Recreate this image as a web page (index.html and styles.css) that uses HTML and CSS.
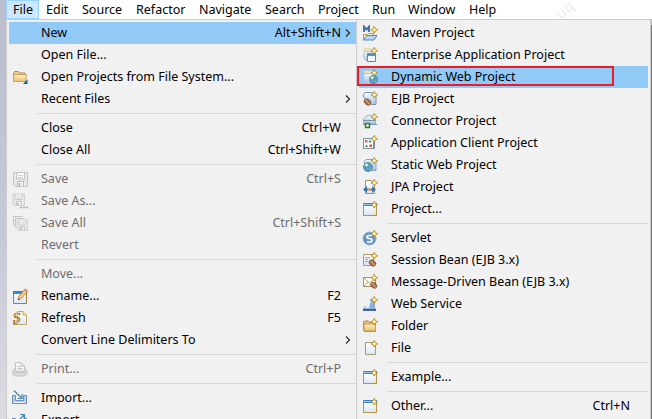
FILE: index.html
```
<!DOCTYPE html>
<html lang="en">
<head>
<meta charset="utf-8">
<title>File menu</title>
<link rel="stylesheet" href="styles.css">
</head>
<body>
<svg class="defs" aria-hidden="true">
  <defs>
    <linearGradient id="gold" x2="0" y2="1"><stop stop-color="#fff3c4"/><stop offset="1" stop-color="#ebc06c"/></linearGradient>
    <linearGradient id="sky" x2="0" y2="1"><stop stop-color="#f2f8fd"/><stop offset="1" stop-color="#a9c6e4"/></linearGradient>
    <linearGradient id="paper" x2="0" y2="1"><stop stop-color="#fff"/><stop offset="1" stop-color="#d9e6f6"/></linearGradient>
    <symbol id="spark" viewBox="0 0 8 8"><path d="M4 .4 5.200 2.800 7.600 4 5.200 5.200 4 7.600 2.800 5.200.4 4 2.800 2.800Z" fill="#fff6c2" stroke="#b68a1e"/></symbol>
    <symbol id="jar" viewBox="0 0 16 16"><path d="M2.500 4.500h9v9h-8q-2-2-2-5Z" fill="url(#sky)" stroke="#b4c4d2"/><path d="M1 3q0-1.500 1.500-1.500H10L9 4H2Z" fill="#e3c681"/><path d="M2.500 3H10" stroke="#fff"/></symbol>
    <symbol id="window" viewBox="0 0 16 16"><path d="M1.500 3.500h13v11h-13Z" fill="url(#paper)" stroke="#ad9355"/><path d="M1 2h14v3H1Z" fill="#3f87c8"/><path d="M1 3.500h14" stroke="#8cc8ee"/><path d="M14 8v6H8q5-1 6-6Z" fill="#f6e7b0"/></symbol>
    <symbol id="bean" viewBox="0 0 8 8"><ellipse cx="4" cy="4" rx="3.800" ry="2.700" transform="rotate(38 4 4)" fill="#a8724a" stroke="#6b4226" stroke-width=".6"/><path d="M1 1.500Q4 3 4 4t3 2.500" fill="none" stroke="#e8c8a0" stroke-width=".8"/></symbol>
    <symbol id="disk" viewBox="0 0 16 16"><path d="M1.500 2q0-.5.500-.5h13q.5 0 .5.500v13q0 .5-.5.500H3L1.500 14Z" fill="#e8e8e8" stroke="#c4c4c4"/><path d="M4.500 2v6h8V2" fill="#f7f7f7" stroke="#c4c4c4"/><path d="M6 4.500h5M6 6.500h5" stroke="#d0d0d0"/><path d="M5.500 15v-4.500h6V15" fill="#f2f2f2" stroke="#bababa"/><path d="M7.500 12v3" stroke="#b4b4b4" stroke-width="1.500"/></symbol>
    <symbol id="globe" viewBox="0 0 10 10"><circle cx="5" cy="5" r="4.500" fill="#5a9bd0" stroke="#4a7cb2" stroke-width=".8"/><path d="M2 2q4-2 4 1L4 5 1 4ZM6 6l3-1-2 4Z" fill="#80b86b"/><circle cx="3.500" cy="3" r="1.300" fill="#e8f7fb"/></symbol>
  </defs>
</svg>

<nav class="menubar">
  <span class="menubar__item menubar__item--open">File</span><span class="menubar__item">Edit</span><span class="menubar__item">Source</span><span class="menubar__item">Refactor</span><span class="menubar__item">Navigate</span><span class="menubar__item">Search</span><span class="menubar__item">Project</span><span class="menubar__item">Run</span><span class="menubar__item">Window</span><span class="menubar__item">Help</span>
  <span class="watermark">uq</span>
</nav>

<div class="panes">
  <ul class="menu menu--file">
    <li class="item item--active"><span class="label">New</span><kbd>Alt+Shift+N</kbd><svg class="chevron" viewBox="0 0 6 10"><path d="m1 1.500 3.500 3.500L1 8.500"/></svg></li>
    <li class="item"><span class="label">Open File...</span></li>
    <li class="item"><svg class="icon" viewBox="0 0 16 16"><path d="M1.500 12.500v-8l1-2h4l1 1.500h5.500v8.500Z" fill="#efd08c" stroke="#b98a42"/><path d="M2 5.500h12.500l-1 7H1.500Z" fill="url(#gold)" stroke="#c9a561"/><path d="M15.500 10.500v4.500H11Z" fill="#155998"/></svg><span class="label">Open Projects from File System...</span></li>
    <li class="item"><span class="label">Recent Files</span><svg class="chevron" viewBox="0 0 6 10"><path d="m1 1.500 3.500 3.500L1 8.500"/></svg></li>
    <li class="separator"></li>
    <li class="item"><span class="label">Close</span><kbd>Ctrl+W</kbd></li>
    <li class="item"><span class="label">Close All</span><kbd>Ctrl+Shift+W</kbd></li>
    <li class="separator"></li>
    <li class="item item--disabled"><svg class="icon" viewBox="0 0 16 16"><use href="#disk"/></svg><span class="label">Save</span><kbd>Ctrl+S</kbd></li>
    <li class="item item--disabled"><svg class="icon" viewBox="0 0 16 16"><use href="#disk" width="13" height="13"/><path d="M8 14.500h2m1 0h2m1 0h2" stroke="#aaa" stroke-width="1.500"/></svg><span class="label">Save As...</span></li>
    <li class="item item--disabled"><svg class="icon" viewBox="0 0 16 16"><path d="M1.500 10.500v-9h9M3.500 12.500v-9h9" fill="none" stroke="#c4c4c4"/><use href="#disk" x="4" y="4" width="12" height="12"/></svg><span class="label">Save All</span><kbd>Ctrl+Shift+S</kbd></li>
    <li class="item item--disabled"><span class="label">Revert</span></li>
    <li class="separator"></li>
    <li class="item item--disabled"><span class="label">Move...</span></li>
    <li class="item"><svg class="icon" viewBox="0 0 16 16"><path d="M1.500 4.500h13v11h-13Z" fill="url(#paper)" stroke="#9b8146"/><path d="M1 3h12v3H1Z" fill="#3987c4"/><path d="m6 12 1-4 6-7 2.500 2.500-6 7Z" fill="#f0c879" stroke="#a57542" stroke-width=".7"/><path d="m12 2 1.500-1.500 2.500 2L14.500 4Z" fill="#db8d85"/><path d="m6 12 .5-1.800 1.300 1.300Z" fill="#333"/></svg><span class="label">Rename...</span><kbd>F2</kbd></li>
    <li class="item"><svg class="icon" viewBox="0 0 16 16"><path d="M5.500 1.500H11L14.500 5v9.500h-9Z" fill="url(#paper)" stroke="#c0a971"/><path d="M11 1v4h4" fill="#f5dfa3" stroke="#c5aa6d"/><path d="M7.500 5V3.500H5Q2.500 3.500 2.500 5.500T5 7.500h2M2 11.500h2q3.500 0 3.500-2T5 8M2 10v4h3" fill="none" stroke="#b27b25" stroke-width="1.700"/><path d="M6.500 3.700H5Q3 4 3 5.500M3 11.500q4 0 4-1.500" fill="none" stroke="#f3cf80" stroke-width=".8"/></svg><span class="label">Refresh</span><kbd>F5</kbd></li>
    <li class="item"><span class="label">Convert Line Delimiters To</span><svg class="chevron" viewBox="0 0 6 10"><path d="m1 1.500 3.500 3.500L1 8.500"/></svg></li>
    <li class="separator"></li>
    <li class="item item--disabled"><svg class="icon" viewBox="0 0 16 16"><path d="M.5 9.500 3 7.500h10l2 2v3L13 15H3L.5 13Z" fill="#ddd" stroke="#c4c4c4"/><path d="M3.500 10v-8.500H9L12.500 5v5Z" fill="#f5f5f5" stroke="#c4c4c4"/><path d="M9 2v3h3M5.500 5.500h3M5.500 7.500h5M2 11.500h12" fill="none" stroke="#c0c0c0"/></svg><span class="label">Print...</span><kbd>Ctrl+P</kbd></li>
    <li class="separator"></li>
    <li class="item"><svg class="icon" viewBox="0 0 16 16"><path d="M.5 5.500h3v5h8v-5h3v8H.5Z" fill="#b4cdea" stroke="#6990c0"/><path d="M2 12.500h11" stroke="#eaf4ff"/><path d="m2 .5 7.500 7.500M10 4v4.500H5.500" fill="none" stroke="#4786ac" stroke-width="1.200"/></svg><span class="label">Import...</span></li>
    <li class="item"><svg class="icon" viewBox="0 0 16 16"><path d="M.5 6.500h3v4h8v-4h3v8H.5Z" fill="#a7c3e3" stroke="#5380b5"/><path d="m6 9 6-6M8 2.500h4.500V7" fill="none" stroke="#4786ac" stroke-width="1.200"/></svg><span class="label">Export...</span></li>
  </ul>

  <ul class="menu menu--new">
    <li class="item"><svg class="icon" viewBox="0 0 16 16"><path d="M1.500 14.500v-5h4l1-1h5v6" fill="#fbf0c5" stroke="#b7974c"/><path d="M4.500 10.500H15l-3 4.500H1.500Z" fill="#b9d6f4" stroke="#5f86ba"/><path d="M2 7V1.500l2.500 3 2.500-3V7" fill="none" stroke="#3b6797" stroke-width="1.800"/><use href="#spark" x="8.500" y="1" width="7.500" height="7.500"/></svg><span class="label">Maven Project</span></li>
    <li class="item"><svg class="icon" viewBox="0 0 16 16"><use href="#jar"/><path d="M5.500 6.500h8v8h-8Z" fill="#edf7fd" stroke="#6382a0"/><path d="M5 6h9v3H5Z" fill="#5990bd"/><use href="#spark" x="8.500" y="0" width="7.500" height="7.500"/></svg><span class="label">Enterprise Application Project</span></li>
    <li class="item item--active item--marked"><svg class="icon" viewBox="0 0 16 16"><use href="#jar"/><use href="#globe" x="7" y="6" width="9" height="9"/><use href="#spark" x="8.500" y="0" width="7.500" height="7.500"/></svg><span class="label">Dynamic Web Project</span></li>
    <li class="item"><svg class="icon" viewBox="0 0 16 16"><path d="m1 4 2-2.500h7L14 5v8.500H5Z" fill="url(#sky)" stroke="#8094ab"/><use href="#bean" x="1" y="7" width="9" height="8"/><use href="#spark" x="8.500" y="0" width="7.500" height="7.500"/></svg><span class="label">EJB Project</span></li>
    <li class="item"><svg class="icon" viewBox="0 0 16 16"><path d="M1.500 6q3-4 7-4l5 4v5h-12Z" fill="url(#sky)" stroke="#9fadba"/><path d="M1 7.500h12M1 11.500h14" stroke="#7e92a5"/><path d="M3.500 10.500h4v4h-4Z" fill="#dceecf" stroke="#2e7b43" stroke-width="1.400"/><use href="#spark" x="8.500" y="0" width="7.500" height="7.500"/></svg><span class="label">Connector Project</span></li>
    <li class="item"><svg class="icon" viewBox="0 0 16 16"><path d="M1.500 3.500h10v10h-10Z" fill="#fff" stroke="#7095ad"/><path d="M1 13.500h11.500V7" fill="none" stroke="#7f8e9d"/><path d="M3 5h2.500v2.500H3Z" fill="#d7634b"/><path d="M7.500 9.500H10V12H7.500Z" fill="#df4b3f"/><path d="m3 12 1.500-2.500L6 12Z" fill="#34875d"/><circle cx="8" cy="6.500" r="1.300" fill="#4ba65b"/><use href="#spark" x="8.500" y="0" width="7.500" height="7.500"/></svg><span class="label">Application Client Project</span></li>
    <li class="item"><svg class="icon" viewBox="0 0 16 16"><path d="m2 5 2-2.500h7L14 5v8.500H5Z" fill="url(#sky)" stroke="#8ba2bd"/><use href="#globe" x="1" y="5" width="10" height="10"/><use href="#spark" x="8.500" y="0" width="7.500" height="7.500"/></svg><span class="label">Static Web Project</span></li>
    <li class="item"><svg class="icon" viewBox="0 0 16 16"><path d="M3.500 1.500H9l3.500 3v10h-9Z" fill="url(#paper)" stroke="#aa9252"/><path d="M2 10.500h11" stroke="#2866a0" stroke-width="1.500"/><path d="m5 7-4 3.500L5 14ZM10 7l4 3.500-4 3.500Z" fill="#3d75a8"/><path d="M6 10.500h3" stroke="#e69546" stroke-width="2"/><use href="#spark" x="8.500" y="0" width="7.500" height="7.500"/></svg><span class="label">JPA Project</span></li>
    <li class="item"><svg class="icon" viewBox="0 0 16 16"><use href="#window"/><use href="#spark" x="8.500" y="0" width="7.500" height="7.500"/></svg><span class="label">Project...</span></li>
    <li class="separator"></li>
    <li class="item"><svg class="icon" viewBox="0 0 16 16"><circle cx="7.500" cy="8.500" r="6.500" fill="#6494c2" stroke="#8fb0cd"/><path d="M10 5.500H7Q5 5.500 5 7t2.500 1.500T10 10.200 7.500 12H5" fill="none" stroke="#fff" stroke-width="1.700"/><use href="#spark" x="8.500" y="0" width="7.500" height="7.500"/></svg><span class="label">Servlet</span></li>
    <li class="item"><svg class="icon" viewBox="0 0 16 16"><path d="M1.500 2.500h10v11h-10Z" fill="url(#paper)" stroke="#a99764"/><path d="M3 5.500h5M3 7.500h3M3 9.500h3" stroke="#89a9c7"/><use href="#bean" x="6" y="7" width="9" height="8"/><use href="#spark" x="8.500" y="0" width="7.500" height="7.500"/></svg><span class="label">Session Bean (EJB 3.x)</span></li>
    <li class="item"><svg class="icon" viewBox="0 0 16 16"><path d="M1.500 3.500h12v9h-12Z" fill="#fffef4" stroke="#aa9356"/><path d="m2 4 5.500 5L13 4M2 12l4-4" fill="none" stroke="#b5a067"/><use href="#bean" x="8" y="7.500" width="7.500" height="7.500"/><use href="#spark" x="8.500" y="0" width="7.500" height="7.500"/></svg><span class="label">Message-Driven Bean (EJB 3.x)</span></li>
    <li class="item"><svg class="icon" viewBox="0 0 16 16"><path d="m1 14 2-3 3-1 3-7 4 2-1 6 2 3Z" fill="#8fb0d8" stroke="#7693b8"/><path d="m6 6-3 6h4L9 4Z" fill="#e5f2fb"/><path d="M1 14h13" stroke="#244788" stroke-width="1.500"/><use href="#spark" x="8.500" y="0" width="7.500" height="7.500"/></svg><span class="label">Web Service</span></li>
    <li class="item"><svg class="icon" viewBox="0 0 16 16"><path d="M1.500 12.500v-8l1-1.500h4l1 1.500h6v9h-11Z" fill="#ecc27b" stroke="#b58343"/><path d="M2 6h11.500v7H2Z" fill="url(#gold)" stroke="#c99b57"/><use href="#spark" x="8.500" y="0" width="7.500" height="7.500"/></svg><span class="label">Folder</span></li>
    <li class="item"><svg class="icon" viewBox="0 0 16 16"><path d="M3.500 2.500h10v12h-10Z" fill="url(#paper)" stroke="#aa9b70"/><use href="#spark" x="8.500" y="0" width="7.500" height="7.500"/></svg><span class="label">File</span></li>
    <li class="separator"></li>
    <li class="item"><svg class="icon" viewBox="0 0 16 16"><use href="#window"/><use href="#spark" x="8.500" y="0" width="7.500" height="7.500"/></svg><span class="label">Example...</span></li>
    <li class="separator"></li>
    <li class="item"><svg class="icon" viewBox="0 0 16 16"><use href="#window"/><use href="#spark" x="8.500" y="0" width="7.500" height="7.500"/></svg><span class="label">Other...</span><kbd>Ctrl+N</kbd></li>
  </ul>
  <div class="edge"></div>
</div>
</body>
</html>
```
FILE: styles.css
```
*, *::after { box-sizing: border-box; }
body {
  margin: 0;
  width: 652px;
  height: 419px;
  overflow: hidden;
  background: linear-gradient(#b9bdce, #c7cad9 60%, #dcdce1);
  color: #000;
  font: 12.5px/22px "Noto Sans", "Open Sans", sans-serif;
}
.defs { position: absolute; width: 0; height: 0; }
.menubar {
  position: relative;
  display: grid;
  grid-template-columns: 33px 36px 54px 63px 66px 53px 54px 36px 61px 42px;
  height: 19px;
  margin-left: 6px;
  background: #fff;
  line-height: 19px;
}
.menubar__item { padding-left: 7px; white-space: nowrap; }
.menubar__item--open {
  padding-left: 6px;
  border: 1px solid #99d1ff;
  background: #cce8ff;
  line-height: 17px;
}
.watermark {
  position: absolute;
  top: 0;
  left: 549px;
  color: #ededed;
  font-size: 15px;
  transform: rotate(-42deg);
}
.panes {
  position: relative;
  display: grid;
  grid-template-columns: 350px 295px 1px;
  height: 400px;
  margin-left: 6px;
  overflow: hidden;
}
.menu {
  margin: 0;
  padding: 2px 0 0 2px;
  border: solid #ccc;
  border-width: 1px 0 0 1px;
  background: linear-gradient(90deg, #f0f0f0 29px, #f1f1f1 30px);
  list-style: none;
}
.menu--new { padding-right: 2px; border-right-width: 1px; }
.item {
  position: relative;
  display: grid;
  grid-template-columns: 32px 1fr auto 15px;
  align-items: center;
  height: 22px;
  white-space: nowrap;
}
.menu--new .item { grid-template-columns: 32px 1fr auto 18px; }
.icon { grid-column: 1; grid-row: 1; width: 16px; height: 16px; margin-left: 3px; }
.label { grid-column: 2; grid-row: 1; }
kbd { grid-column: 3; grid-row: 1; font: inherit; }
.chevron {
  grid-column: 4;
  grid-row: 1;
  width: 6px;
  height: 10px;
  margin-left: 4px;
  fill: none;
  stroke: #333;
  stroke-width: 1.3;
}
.item--active { background: #91c9f7; }
.item--disabled { color: #6d6d6d; }
.item--marked::after {
  content: "";
  position: absolute;
  top: 0;
  left: -2px;
  width: 257px;
  height: 20px;
  border: 2px solid #ed1c24;
}
.separator {
  height: 7px;
  margin-left: 28px;
  background: linear-gradient(#d7d7d7, #d7d7d7) 0 3px / 100% 1px no-repeat;
}
.edge { margin-top: 6px; background: #777; }
```
